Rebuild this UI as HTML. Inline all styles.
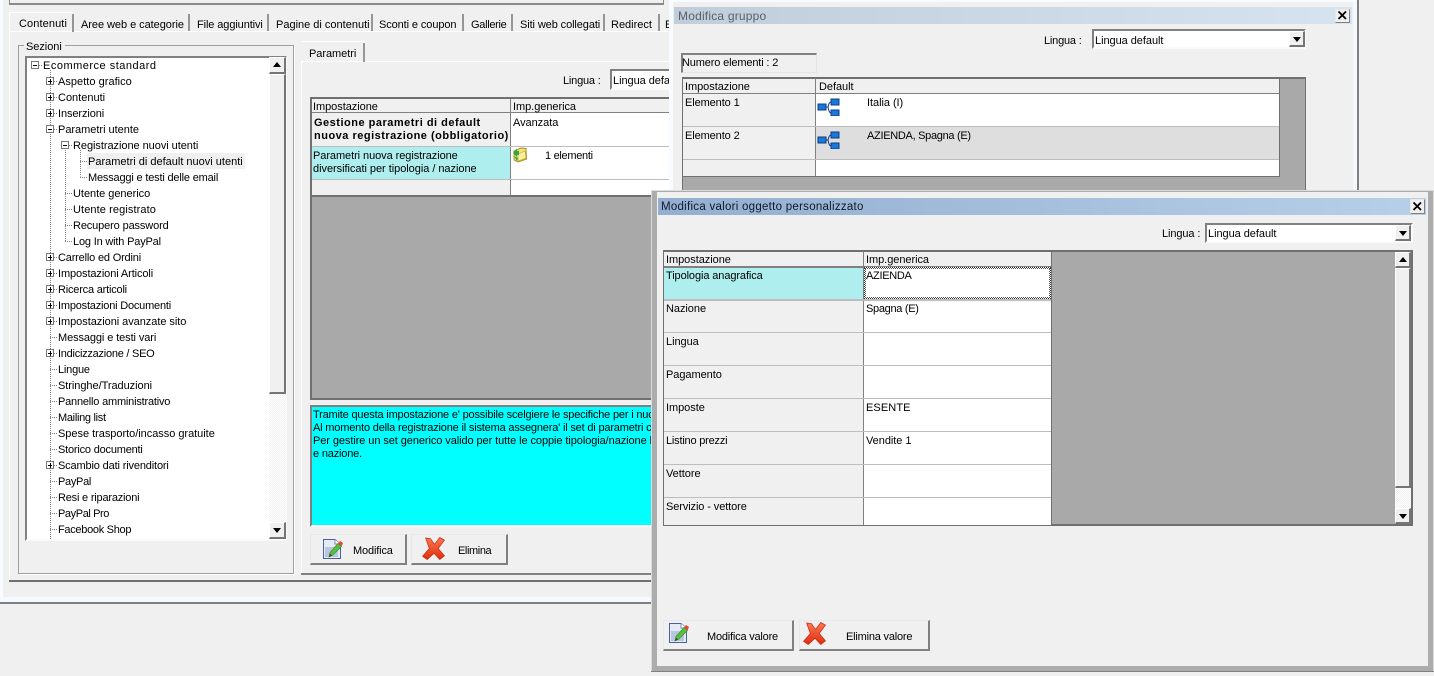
<!DOCTYPE html>
<html><head><meta charset="utf-8"><style>
html,body{margin:0;padding:0;background:#f0f0f0}
#r{position:relative;width:1434px;height:676px;overflow:hidden;background:#f0f0f0;font:11px/13px "Liberation Sans",sans-serif;color:#000}
#r div{position:absolute;box-sizing:border-box}
#r span{position:absolute;white-space:nowrap;letter-spacing:-.05px;margin-top:1px}
svg{position:absolute;left:0;top:0}
.sunk{background:#fff;border:2px solid;border-color:#808080 #fafafa #fafafa #808080}
.btn{background:#f0f0f0;border:2px solid;border-color:#e8e8e8 #808080 #808080 #e8e8e8;border-width:1px 2px 2px 1px}
.sb{background:#f0f0f0;border:1px solid;border-color:#fff #757575 #757575 #fff;border-width:1px 2px 2px 1px}
.dith{background:repeating-conic-gradient(#f0f0f0 0 25%,#fff 0 50%) 0 0/2px 2px}
.up:after{content:"";position:absolute;left:3px;top:4px;border:4px solid transparent;border-top:0;border-bottom:5px solid #000}
.dn:after{content:"";position:absolute;left:3px;top:5px;border:4px solid transparent;border-bottom:0;border-top:5px solid #000}
.hl{background:#808080;height:1px}
.vl{background:#808080;width:1px}
.cell{background:#bdbdbd}
.sep{width:2px;background:#969696}
</style></head><body><div id="r">
<svg width="0" height="0"><defs>
<linearGradient id="gx" x1="0" y1="0" x2="0" y2="1"><stop offset="0" stop-color="#fb7a50"/><stop offset="1" stop-color="#e02c10"/></linearGradient>
<symbol id="pen" viewBox="0 0 22 22"><path d="M1.500 1.500H13L18.500 6V20.500H1.500Z" fill="#e4eaf6" stroke="#4a6296"/><path d="M13 1.500V6H18.500" fill="#fff" stroke="#7a8cb4"/><rect x="3" y="9" width="13" height="10" fill="#b8c6e2"/><path d="M7 19L8 14.500L16 5.500L19.500 8.500L11 17Z" fill="#58c040" stroke="#3c8c30" stroke-width=".7"/><path d="M16 5.500L18 3L21 5L19.500 8.500Z" fill="#e24a30"/><path d="M7 19L8 15.500L10 17.500Z" fill="#444"/></symbol>
<symbol id="xx" viewBox="0 0 22 22"><path d="M3.500 1L8 1.500L12 7L17 .500L21.500 3L15.500 11L21.500 18L17 21.500L11.500 15.500L5 21.500L.500 18.500L7 11Z" fill="url(#gx)" stroke="#c82a10" stroke-width=".7"/></symbol>
<symbol id="tr" viewBox="0 0 23 18"><rect x="1" y="6" width="8" height="6" fill="#1a78d8" stroke="#0c3c84"/><rect x="14" y="1" width="8" height="6" fill="#1a78d8" stroke="#0c3c84"/><rect x="14" y="12" width="8" height="6" fill="#1a78d8" stroke="#0c3c84"/><path d="M9 9H11Q12 4 14 4M11 9Q12 15 14 15" fill="none" stroke="#0c3c84"/></symbol>
</defs></svg>

<!-- MAIN WINDOW -->
<div style="left:0;top:0;width:3px;height:597px;background:#f8fbff"></div>
<div style="left:0;top:597px;width:1434px;height:6px;background:#f6f9fd"></div>
<div class="hl" style="left:0;top:602px;width:660px;height:2px;background:#808080"></div>
<div style="left:9px;top:0;width:655px;height:5px;border:solid #8a8a8a;border-width:0 1px 2px 1px"></div>
<div style="left:9px;top:31px;width:660px;height:1px;background:#fff"></div>
<div style="left:9px;top:12px;width:1px;height:568px;background:#fff"></div>
<div class="hl" style="left:9px;top:580px;width:660px;height:2px;background:#707070"></div>

<span style="left:19px;top:17px;letter-spacing:.1px">Contenuti</span>
<div class="sep" style="left:72px;top:14px;height:18px"></div>
<div style="left:10px;top:12px;width:63px;height:1px;background:#fff"></div>
<span style="left:81px;top:18px">Aree web e categorie</span>
<div class="sep" style="left:188px;top:14px;height:17px"></div>
<span style="left:197px;top:18px;letter-spacing:-.1px">File aggiuntivi</span>
<div class="sep" style="left:267px;top:14px;height:17px"></div>
<span style="left:276px;top:18px;letter-spacing:0">Pagine di contenuti</span>
<div class="sep" style="left:371px;top:14px;height:17px"></div>
<span style="left:379px;top:18px;letter-spacing:-.1px">Sconti e coupon</span>
<div class="sep" style="left:462px;top:14px;height:17px"></div>
<span style="left:471px;top:18px;letter-spacing:-.3px">Gallerie</span>
<div class="sep" style="left:511px;top:14px;height:17px"></div>
<span style="left:520px;top:18px;letter-spacing:-.1px">Siti web collegati</span>
<div class="sep" style="left:603px;top:14px;height:17px"></div>
<span style="left:611px;top:18px;letter-spacing:0">Redirect</span>
<div class="sep" style="left:658px;top:14px;height:17px"></div>
<span style="left:665px;top:18px">E</span>

<!-- Sezioni group -->
<div style="left:18px;top:45px;width:276px;height:529px;border:1px solid #a0a0a0;box-shadow:1px 1px 0 #fff"></div>
<span style="left:24px;top:40px;background:#f0f0f0;padding:0 3px 0 2px">Sezioni</span>
<div class="sunk" style="left:25px;top:56px;width:262px;height:485px"></div>
<div style="left:87px;top:153px;width:158px;height:16px;background:#f0f0f0"></div>

<svg width="1434" height="676" fill="none" stroke="#808080">
<g stroke-dasharray="1 1">
<path d="M50.500 70V539M65.500 150V242M80.500 150V176.500M39 65.500H43M54 81.500H57M54 97.500H57M54 113.500H57M54 129.500H57M69 145.500H72M80 161.500H87M80 177.500H87M65 193.500H72M65 209.500H72M65 225.500H72M65 241.500H72M54 257.500H57M54 273.500H57M54 289.500H57M54 305.500H57M54 321.500H57M50 337.500H57M54 353.500H57M50 369.500H57M50 385.500H57M50 401.500H57M50 417.500H57M50 433.500H57M50 449.500H57M54 465.500H57M50 481.500H57M50 497.500H57M50 513.500H57M50 529.500H57"/>
</g>
<g fill="#fff" stroke="#777"><rect x="31.500" y="61.500" width="7" height="7"/><rect x="46.500" y="77.500" width="7" height="7"/><rect x="46.500" y="93.500" width="7" height="7"/><rect x="46.500" y="109.500" width="7" height="7"/><rect x="46.500" y="125.500" width="7" height="7"/><rect x="61.500" y="141.500" width="7" height="7"/><rect x="46.500" y="253.500" width="7" height="7"/><rect x="46.500" y="269.500" width="7" height="7"/><rect x="46.500" y="285.500" width="7" height="7"/><rect x="46.500" y="301.500" width="7" height="7"/><rect x="46.500" y="317.500" width="7" height="7"/><rect x="46.500" y="349.500" width="7" height="7"/><rect x="46.500" y="461.500" width="7" height="7"/></g>
<path stroke="#000" d="M33 65.500H37M48 81.500H52M50.500 79V84M48 97.500H52M50.500 95V100M48 113.500H52M50.500 111V116M48 129.500H52M63 145.500H67M48 257.500H52M50.500 255V260M48 273.500H52M50.500 271V276M48 289.500H52M50.500 287V292M48 305.500H52M50.500 303V308M48 321.500H52M50.500 319V324M48 353.500H52M50.500 351V356M48 465.500H52M50.500 463V468"/>
</svg>

<span style="left:43px;top:59px;letter-spacing:.5px">Ecommerce standard</span>
<span style="left:58px;top:75px;letter-spacing:.03px">Aspetto grafico</span>
<span style="left:58px;top:91px;letter-spacing:0">Contenuti</span>
<span style="left:58px;top:107px;letter-spacing:-.1px">Inserzioni</span>
<span style="left:58px;top:123px;letter-spacing:-.02px">Parametri utente</span>
<span style="left:73px;top:139px">Registrazione nuovi utenti</span>
<span style="left:88px;top:155px;letter-spacing:0">Parametri di default nuovi utenti</span>
<span style="left:88px;top:171px;letter-spacing:-.18px">Messaggi e testi delle email</span>
<span style="left:73px;top:187px;letter-spacing:-.03px">Utente generico</span>
<span style="left:73px;top:203px;letter-spacing:.1px">Utente registrato</span>
<span style="left:73px;top:219px;letter-spacing:-.13px">Recupero password</span>
<span style="left:73px;top:235px;letter-spacing:-.18px">Log In with PayPal</span>
<span style="left:58px;top:251px;letter-spacing:-.18px">Carrello ed Ordini</span>
<span style="left:58px;top:267px;letter-spacing:-.1px">Impostazioni Articoli</span>
<span style="left:58px;top:283px;letter-spacing:-.2px">Ricerca articoli</span>
<span style="left:58px;top:299px;letter-spacing:-.2px">Impostazioni Documenti</span>
<span style="left:58px;top:315px">Impostazioni avanzate sito</span>
<span style="left:58px;top:331px;letter-spacing:-.1px">Messaggi e testi vari</span>
<span style="left:58px;top:347px;letter-spacing:-.25px">Indicizzazione / SEO</span>
<span style="left:58px;top:363px;letter-spacing:-.2px">Lingue</span>
<span style="left:58px;top:379px">Stringhe/Traduzioni</span>
<span style="left:58px;top:395px;letter-spacing:-.2px">Pannello amministrativo</span>
<span style="left:58px;top:411px;letter-spacing:-.3px">Mailing list</span>
<span style="left:58px;top:427px;letter-spacing:-.03px">Spese trasporto/incasso gratuite</span>
<span style="left:58px;top:443px;letter-spacing:-.2px">Storico documenti</span>
<span style="left:58px;top:459px;letter-spacing:-.15px">Scambio dati rivenditori</span>
<span style="left:58px;top:475px;letter-spacing:-.3px">PayPal</span>
<span style="left:58px;top:491px;letter-spacing:-.2px">Resi e riparazioni</span>
<span style="left:58px;top:507px;letter-spacing:-.4px">PayPal Pro</span>
<span style="left:58px;top:523px;letter-spacing:-.3px">Facebook Shop</span>

<div class="dith" style="left:269px;top:57px;width:17px;height:482px"></div>
<div class="sb up" style="left:269px;top:57px;width:17px;height:17px"></div>
<div class="sb" style="left:269px;top:74px;width:17px;height:320px"></div>
<div class="sb dn" style="left:269px;top:522px;width:17px;height:17px"></div>

<!-- Parametri panel -->
<div style="left:301px;top:61px;width:370px;height:1px;background:#fff"></div>
<div style="left:301px;top:61px;width:1px;height:514px;background:#fff"></div>
<div style="left:301px;top:573px;width:370px;height:2px;background:#808080"></div>
<div style="left:302px;top:41px;width:62px;height:1px;background:#fff"></div>
<div class="sep" style="left:363px;top:43px;height:19px"></div>
<span style="left:309px;top:47px">Parametri</span>
<span style="left:563px;top:74px;letter-spacing:-.2px">Lingua :</span>
<div class="sunk" style="left:610px;top:69px;width:70px;height:21px"></div>
<span style="left:613px;top:74px">Lingua default</span>

<div style="left:310px;top:97px;width:370px;height:303px;background:#a9a9a9;border:solid #707070;border-width:2px 0 2px 2px"></div>
<div style="left:312px;top:99px;width:358px;height:97px;background:#fff"></div>
<div style="left:312px;top:99px;width:198px;height:14px;background:#f0f0f0"></div>
<div style="left:511px;top:99px;width:160px;height:14px;background:#f0f0f0"></div>
<div style="left:312px;top:113px;width:198px;height:33px;background:#f0f0f0"></div>
<div style="left:312px;top:147px;width:198px;height:32px;background:#aeeeee"></div>
<div style="left:312px;top:180px;width:198px;height:15px;background:#f0f0f0"></div>
<div class="vl" style="left:510px;top:99px;height:97px"></div>
<div class="hl" style="left:312px;top:112px;width:358px"></div>
<div class="cell" style="left:312px;top:146px;width:358px;height:1px"></div>
<div class="cell" style="left:312px;top:179px;width:358px;height:1px"></div>
<div style="left:310px;top:195px;width:360px;height:2px;background:#707070"></div>
<span style="left:313px;top:100px">Impostazione</span>
<span style="left:513px;top:100px">Imp.generica</span>
<span style="left:314px;top:116px;font-weight:bold;letter-spacing:.5px">Gestione parametri di default</span>
<span style="left:314px;top:129px;font-weight:bold;letter-spacing:.5px">nuova registrazione (obbligatorio)</span>
<span style="left:513px;top:116px">Avanzata</span>
<span style="left:313px;top:149px;letter-spacing:-.07px">Parametri nuova registrazione</span>
<span style="left:313px;top:162px;letter-spacing:-.04px">diversificati per tipologia / nazione</span>
<span style="left:545px;top:149px;letter-spacing:-.3px">1 elementi</span>
<svg style="left:512px;top:147px" width="16" height="16" viewBox="0 0 16 16"><path d="M2 4L9 1L14 1.500L14.500 12L6 15L2 13Z" fill="#f4e272" stroke="#a8902c"/><path d="M6 7L13 4L14 11L6 14Z" fill="#fbf09a" stroke="#b8a040" stroke-width=".6"/><path d="M1 6L5 1.500V4H7V8H5V10Z" fill="#2fa83c"/><path d="M2 9L5 14L6 11Z" fill="#2fa83c"/></svg>

<div class="sunk" style="left:310px;top:405px;width:370px;height:122px;background:#00ffff"></div>
<span style="left:313px;top:408px;letter-spacing:-.18px">Tramite questa impostazione e' possibile scelgiere le specifiche per i nuovi utenti</span>
<span style="left:313px;top:421px;letter-spacing:-.18px">Al momento della registrazione il sistema assegnera' il set di parametri corrispondenti</span>
<span style="left:313px;top:434px;letter-spacing:-.08px">Per gestire un set generico valido per tutte le coppie tipologia/nazione lasciare vuoti tipologia</span>
<span style="left:313px;top:447px;letter-spacing:-.18px">e nazione.</span>

<div class="btn" style="left:310px;top:534px;width:97px;height:31px"></div>
<svg style="left:322px;top:538px" width="22" height="22"><use href="#pen"/></svg>
<span style="left:353px;top:544px;letter-spacing:-.15px">Modifica</span>
<div class="btn" style="left:411px;top:534px;width:97px;height:31px"></div>
<svg style="left:422px;top:537px" width="23" height="23"><use href="#xx"/></svg>
<span style="left:458px;top:544px;letter-spacing:-.4px">Elimina</span>

<!-- DIALOG 1 -->
<div style="left:669px;top:0;width:690px;height:192px;background:#f0f0f0;border-top:2px solid #f8fbff;border-left:4px solid #f8fbff;border-right:6px solid #f4f7fb"></div>
<div style="left:1357px;top:0;width:2px;height:192px;background:#808080"></div>
<div style="left:674px;top:7px;width:678px;height:17px;background:linear-gradient(90deg,#c0cedc,#d6e3f0)"></div>
<span style="left:678px;top:9px;color:#5a5f66;font-size:12px;letter-spacing:.2px">Modifica gruppo</span>
<div class="btn" style="left:1335px;top:9px;width:15px;height:14px;border-width:1px"></div>
<svg style="left:1338px;top:11px" width="9" height="9"><path d="M.500 .500L8 8M8 .500L.500 8" stroke="#000" stroke-width="1.800"/></svg>
<span style="left:1044px;top:34px;letter-spacing:-.2px">Lingua :</span>
<div class="sunk" style="left:1092px;top:29px;width:214px;height:20px"></div>
<span style="left:1095px;top:34px">Lingua default</span>
<div class="sb dn" style="left:1289px;top:31px;width:16px;height:16px"></div>
<div style="left:681px;top:53px;width:136px;height:20px;border:1px solid;border-width:2px 1px 1px 2px;border-color:#808080 #e4e4e4 #e4e4e4 #808080"></div>
<span style="left:682px;top:56px;letter-spacing:-.15px">Numero elementi : 2</span>

<div style="left:682px;top:77px;width:624px;height:115px;background:#a9a9a9;border:solid #707070;border-width:2px 1px 0 1px"></div>
<div style="left:683px;top:79px;width:596px;height:98px;background:#fff"></div>
<div style="left:683px;top:79px;width:132px;height:14px;background:#f0f0f0"></div>
<div style="left:816px;top:79px;width:463px;height:14px;background:#f0f0f0"></div>
<div style="left:683px;top:94px;width:132px;height:32px;background:#f0f0f0"></div>
<div style="left:683px;top:127px;width:132px;height:32px;background:#f0f0f0"></div>
<div style="left:683px;top:160px;width:132px;height:16px;background:#f0f0f0"></div>
<div style="left:816px;top:127px;width:463px;height:32px;background:#dedede"></div>
<div class="vl" style="left:815px;top:78px;height:98px"></div>
<div class="hl" style="left:683px;top:93px;width:596px"></div>
<div class="cell" style="left:683px;top:126px;width:596px;height:1px"></div>
<div class="cell" style="left:683px;top:159px;width:596px;height:1px"></div>
<div style="left:682px;top:176px;width:598px;height:1px;background:#707070"></div>
<div style="left:1279px;top:78px;width:1px;height:99px;background:#707070"></div>
<span style="left:685px;top:80px">Impostazione</span>
<span style="left:819px;top:80px">Default</span>
<span style="left:685px;top:96px;letter-spacing:-.1px">Elemento 1</span>
<span style="left:685px;top:129px;letter-spacing:-.1px">Elemento 2</span>
<span style="left:867px;top:96px">Italia (I)</span>
<span style="left:867px;top:129px;letter-spacing:-.3px">AZIENDA, Spagna (E)</span>
<svg style="left:817px;top:98px" width="23" height="18"><use href="#tr"/></svg>
<svg style="left:817px;top:131px" width="23" height="18"><use href="#tr"/></svg>

<!-- DIALOG 2 -->
<div style="left:651px;top:190px;width:783px;height:482px;background:#f0f0f0;border:solid #acacac;border-width:2px 6px 6px 6px;outline:1px solid #dcdcdc;outline-offset:-1px"></div>
<div style="left:651px;top:671px;width:783px;height:1px;background:#808080"></div>
<div style="left:658px;top:198px;width:768px;height:17px;background:linear-gradient(90deg,#93aed0,#b8cfe8)"></div>
<span style="left:661px;top:200px;color:#101828;font-size:11.5px;letter-spacing:.27px">Modifica valori oggetto personalizzato</span>
<div class="btn" style="left:1410px;top:199px;width:15px;height:15px;border-width:1px"></div>
<svg style="left:1413px;top:202px" width="9" height="9"><path d="M.500 .500L8 8M8 .500L.500 8" stroke="#000" stroke-width="1.800"/></svg>
<span style="left:1162px;top:227px;letter-spacing:-.1px">Lingua :</span>
<div class="sunk" style="left:1205px;top:223px;width:208px;height:20px"></div>
<span style="left:1208px;top:227px">Lingua default</span>
<div class="sb dn" style="left:1395px;top:225px;width:16px;height:16px"></div>

<div style="left:663px;top:250px;width:750px;height:276px;background:#a9a9a9;border:solid #707070;border-width:2px 2px 2px 1px"></div>
<div style="left:664px;top:252px;width:387px;height:273px;background:#fff"></div>
<div style="left:664px;top:252px;width:199px;height:14px;background:#f0f0f0"></div>
<div style="left:864px;top:252px;width:187px;height:14px;background:#f0f0f0"></div>
<div style="left:664px;top:268px;width:199px;height:31px;background:#aeeeee"></div>
<div style="left:664px;top:300px;width:199px;height:225px;background:#f0f0f0"></div>
<div class="vl" style="left:863px;top:251px;height:274px"></div>
<div class="hl" style="left:664px;top:266px;width:387px;height:2px"></div>
<div class="cell" style="left:664px;top:299px;width:387px;height:2px"></div>
<div class="cell" style="left:664px;top:332px;width:387px;height:1px"></div>
<div class="cell" style="left:664px;top:365px;width:387px;height:1px"></div>
<div class="cell" style="left:664px;top:398px;width:387px;height:1px"></div>
<div class="cell" style="left:664px;top:431px;width:387px;height:1px"></div>
<div class="cell" style="left:664px;top:464px;width:387px;height:1px"></div>
<div class="cell" style="left:664px;top:497px;width:387px;height:1px"></div>
<div style="left:1051px;top:251px;width:1px;height:275px;background:#707070"></div>
<div style="left:864px;top:267px;width:187px;height:32px;border:1px dotted #333;outline:1px dotted #555;outline-offset:-2px;background:#fff"></div>
<span style="left:666px;top:253px">Impostazione</span>
<span style="left:866px;top:253px">Imp.generica</span>
<span style="left:666px;top:269px;letter-spacing:-.1px">Tipologia anagrafica</span>
<span style="left:866px;top:269px;letter-spacing:-.3px">AZIENDA</span>
<span style="left:666px;top:302px">Nazione</span>
<span style="left:866px;top:302px;letter-spacing:-.3px">Spagna (E)</span>
<span style="left:666px;top:335px">Lingua</span>
<span style="left:666px;top:368px">Pagamento</span>
<span style="left:666px;top:401px">Imposte</span>
<span style="left:866px;top:401px;letter-spacing:.1px">ESENTE</span>
<span style="left:666px;top:434px;letter-spacing:-.2px">Listino prezzi</span>
<span style="left:866px;top:434px">Vendite 1</span>
<span style="left:666px;top:467px">Vettore</span>
<span style="left:666px;top:500px;letter-spacing:-.1px">Servizio - vettore</span>

<div class="dith" style="left:1395px;top:252px;width:16px;height:272px"></div>
<div class="sb up" style="left:1395px;top:252px;width:16px;height:16px"></div>
<div class="sb" style="left:1395px;top:268px;width:16px;height:220px"></div>
<div class="sb dn" style="left:1395px;top:508px;width:16px;height:16px"></div>

<div class="btn" style="left:663px;top:620px;width:131px;height:31px"></div>
<svg style="left:668px;top:622px" width="22" height="22"><use href="#pen"/></svg>
<span style="left:707px;top:630px;letter-spacing:-.2px">Modifica valore</span>
<div class="btn" style="left:799px;top:620px;width:131px;height:31px"></div>
<svg style="left:803px;top:622px" width="23" height="23"><use href="#xx"/></svg>
<span style="left:846px;top:630px;letter-spacing:-.2px">Elimina valore</span>
</div></body></html>
